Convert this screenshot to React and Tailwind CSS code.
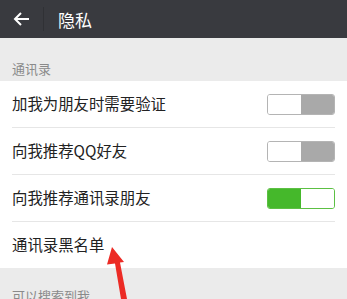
import React from 'react';

const Toggle = ({ on }) => (
  <div
    className={
      'flex h-[21px] w-[68px] overflow-hidden rounded-[3px] border ' +
      (on ? 'border-[#5cc043]' : 'border-[#b4b4b4]')
    }
  >
    {on ? (
      <>
        <div className="w-1/2 bg-[#45b82b]" />
        <div className="w-1/2 bg-white" />
      </>
    ) : (
      <>
        <div className="w-1/2 bg-white" />
        <div className="w-1/2 bg-[#a9a9a9]" />
      </>
    )}
  </div>
);

const Row = ({ label, toggle, last, h = 'h-[47px]' }) => (
  <div className={'mx-3 flex items-center justify-between ' + h + (last ? '' : ' border-b border-[#e6e6e6]')}>
    <span className="text-[15.4px] text-[#222]">{label}</span>
    {toggle !== undefined && <Toggle on={toggle} />}
  </div>
);

export default function App() {
  return (
    <div
      className="relative h-[299px] w-[347px] overflow-hidden bg-[#ebebeb]"
      style={{ fontFamily: '"Noto Sans CJK SC", "Noto Sans", sans-serif' }}
    >
      <div className="flex h-[38px] items-center bg-[#393a3f]">
        <svg className="ml-[13px]" width="17" height="14" viewBox="0 0 17 14" fill="none">
          <path d="M16 7H2M8 1L2 7l6 6" stroke="white" strokeWidth="2" />
        </svg>
        <div className="ml-[13px] h-[24px] w-px bg-[#303135]" />
        <span className="ml-[14px] text-[17px] leading-none text-white">隐私</span>
      </div>

      <div className="px-3 pb-[3px] pt-[22px] text-[13px] leading-[18px] text-[#8a8a8a]">通讯录</div>

      <div className="bg-white">
        <Row label="加我为朋友时需要验证" toggle={false} />
        <Row label="向我推荐QQ好友" toggle={false} />
        <Row label="向我推荐通讯录朋友" toggle={true} />
        <Row label="通讯录黑名单" last h="h-[46px]" />
      </div>

      <div className="px-3 pt-[19px] text-[13px] leading-[18px] text-[#8a8a8a]">可以搜索到我</div>

      <svg className="absolute left-0 top-0" width="347" height="299" viewBox="0 0 347 299">
        <path d="M112 247 L124 262 L120 262.5 L127 299 L121 299 L115 263.5 L107 264.5 Z" fill="#ec2b25" />
      </svg>
    </div>
  );
}
